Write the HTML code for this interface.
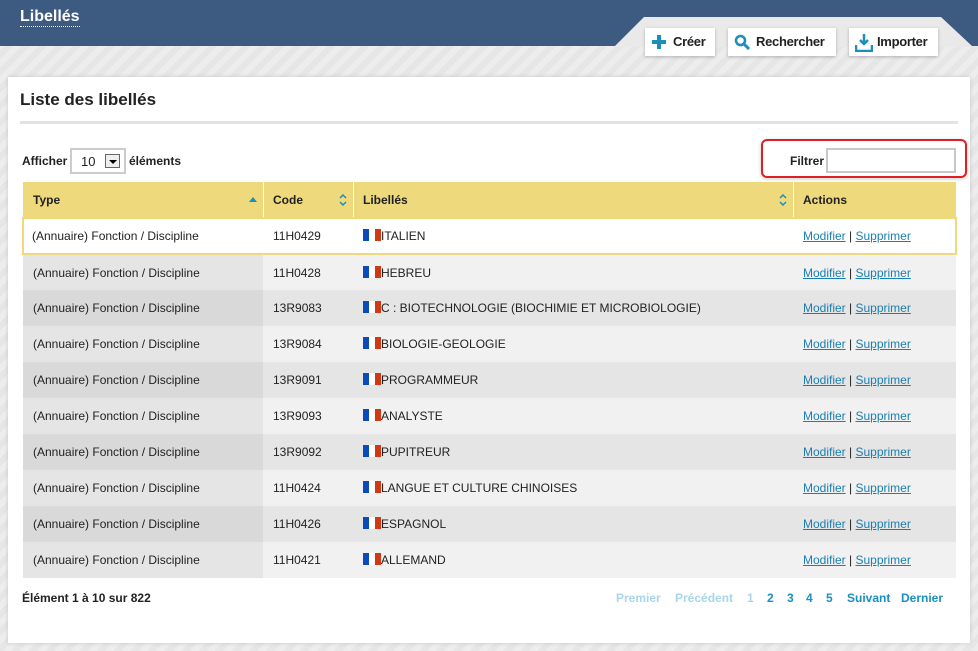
<!DOCTYPE html>
<html><head><meta charset="utf-8"><style>
*{box-sizing:border-box;margin:0;padding:0}
body{width:978px;height:651px;overflow:hidden;font-family:"Liberation Sans",Arial,sans-serif;font-size:12px;color:#222;background:repeating-linear-gradient(135deg,#e6e6e6 0 6px,#ededed 6px 12px);position:relative}
.hdr{position:absolute;left:0;top:0;width:978px;height:46px;background:#3d5a80}
.hdr h1{position:absolute;left:20px;top:8px;color:#fff;font-size:16px;font-weight:bold;border-bottom:1px dotted #fff;line-height:18px}
.tab{position:absolute;left:615px;top:17px;width:363px;height:30px;background:#e9e9e9;clip-path:polygon(29px 0,326px 0,357px 29px,357px 30px,0 30px,0 29px)}
.btn{position:absolute;top:28px;height:28px;background:#fff;box-shadow:0 1px 3px rgba(0,0,0,.25);font-weight:bold;font-size:13px;line-height:28px;color:#222;padding-left:28px;letter-spacing:-0.3px}
.btn svg{position:absolute;left:6px;top:6px}
.panel{position:absolute;left:8px;top:77px;width:962px;height:566px;background:#fff;box-shadow:0 0 4px rgba(0,0,0,.15)}
h2{position:absolute;left:20px;top:90px;font-size:17px;font-weight:bold}
.sep{position:absolute;left:20px;top:121px;width:938px;height:3px;background:#e3e3e3}
.lbl{position:absolute;font-weight:bold;font-size:12px}
table{position:absolute;left:22px;top:182px;width:935px;border-collapse:collapse;table-layout:fixed}
th{background:#eed97c;height:36px;text-align:left;padding-left:10px;font-size:12px;box-shadow:inset 1px 0 #fff;position:relative}
th:first-child{box-shadow:none}
td{height:36px;padding-left:10px;font-size:12px}
tr.w td{background:#fff;border-top:2px solid #eed97c;border-bottom:2px solid #eed97c}
tr.w td:first-child{border-left:2px solid #eed97c;padding-left:8px}tr.w td:last-child{border-right:2px solid #eed97c}
tr.a td{background:#f1f1f1}tr.a td:first-child{background:#e5e5e5}
tr.b td{background:#e5e5e5}tr.b td:first-child{background:#d9d9d9}
.fl{display:inline-block;width:18px;height:12px;vertical-align:-1px;background:linear-gradient(90deg,#0b4bb5 0 6px,#fff 6px 12px,#cf3a12 12px)}
a{color:#1a7fb0;text-decoration:underline}
.pg{position:absolute;top:591px;font-weight:bold;font-size:12px;color:#1a8fc0}
.pg.d{color:#a8d6e8}
.srt{position:absolute;right:6px;top:11px}
</style></head><body>
<div class="hdr"><h1>Libellés</h1></div>
<div class="tab"></div>
<div class="btn" style="left:645px;width:70px"><svg width="16" height="16"><path d="M8 1v14M1 8h14" stroke="#1a8fb8" stroke-width="4"/></svg>Créer</div>
<div class="btn" style="left:728px;width:108px"><svg width="16" height="16"><circle cx="6.5" cy="6.5" r="4.5" fill="none" stroke="#1a8fb8" stroke-width="2.5"/><path d="M10 10l5 5" stroke="#1a8fb8" stroke-width="3"/></svg>Rechercher</div>
<div class="btn" style="left:849px;width:89px"><svg width="18" height="18"><path d="M9 0v9M5 6l4 4 4-4" stroke="#1a8fb8" stroke-width="2.5" fill="none"/><path d="M1 11v6h16v-6" stroke="#1a8fb8" stroke-width="2.5" fill="none"/></svg>Importer</div>
<div class="panel"></div>
<h2>Liste des libellés</h2>
<div class="sep"></div>
<div class="lbl" style="left:22px;top:154px">Afficher</div>
<div style="position:absolute;left:70px;top:148px;width:56px;height:26px;border:2px solid #ccc;background:#fff;font-size:13px;padding:4px 0 0 9px">10<span style="position:absolute;right:4px;top:4px;width:15px;height:14px;border:1px solid #666;background:#eee"><span style="position:absolute;left:3px;top:5px;border:4px solid transparent;border-top:4px solid #000;border-bottom:none"></span></span></div>
<div class="lbl" style="left:129px;top:154px">éléments</div>
<div style="position:absolute;left:761px;top:139px;width:206px;height:39px;border:2px solid #e02020;border-radius:6px;box-shadow:0 1px 4px rgba(0,0,0,.2)"></div>
<div class="lbl" style="left:790px;top:154px">Filtrer</div>
<div style="position:absolute;left:826px;top:148px;width:130px;height:25px;border:2px solid #c8c8c8;background:#fff"></div>
<table>
<colgroup><col style="width:240px"><col style="width:90px"><col style="width:440px"><col></colgroup>
<tr><th>Type<span style="position:absolute;right:6px;top:15px;border:4px solid transparent;border-bottom:5px solid #1a8fb8;border-top:none"></span></th><th>Code<svg class="srt" width="8" height="14"><path d="M1 5l3-3 3 3M1 9l3 3 3-3" stroke="#1a8fb8" stroke-width="1.5" fill="none"/></svg></th><th>Libellés<svg class="srt" width="8" height="14"><path d="M1 5l3-3 3 3M1 9l3 3 3-3" stroke="#1a8fb8" stroke-width="1.5" fill="none"/></svg></th><th>Actions</th></tr>
<tr class="w"><td>(Annuaire) Fonction / Discipline</td><td>11H0429</td><td><span class="fl"></span>ITALIEN</td><td><a>Modifier</a> | <a>Supprimer</a></td></tr>
<tr class="a"><td>(Annuaire) Fonction / Discipline</td><td>11H0428</td><td><span class="fl"></span>HEBREU</td><td><a>Modifier</a> | <a>Supprimer</a></td></tr>
<tr class="b"><td>(Annuaire) Fonction / Discipline</td><td>13R9083</td><td><span class="fl"></span>C : BIOTECHNOLOGIE (BIOCHIMIE ET MICROBIOLOGIE)</td><td><a>Modifier</a> | <a>Supprimer</a></td></tr>
<tr class="a"><td>(Annuaire) Fonction / Discipline</td><td>13R9084</td><td><span class="fl"></span>BIOLOGIE-GEOLOGIE</td><td><a>Modifier</a> | <a>Supprimer</a></td></tr>
<tr class="b"><td>(Annuaire) Fonction / Discipline</td><td>13R9091</td><td><span class="fl"></span>PROGRAMMEUR</td><td><a>Modifier</a> | <a>Supprimer</a></td></tr>
<tr class="a"><td>(Annuaire) Fonction / Discipline</td><td>13R9093</td><td><span class="fl"></span>ANALYSTE</td><td><a>Modifier</a> | <a>Supprimer</a></td></tr>
<tr class="b"><td>(Annuaire) Fonction / Discipline</td><td>13R9092</td><td><span class="fl"></span>PUPITREUR</td><td><a>Modifier</a> | <a>Supprimer</a></td></tr>
<tr class="a"><td>(Annuaire) Fonction / Discipline</td><td>11H0424</td><td><span class="fl"></span>LANGUE ET CULTURE CHINOISES</td><td><a>Modifier</a> | <a>Supprimer</a></td></tr>
<tr class="b"><td>(Annuaire) Fonction / Discipline</td><td>11H0426</td><td><span class="fl"></span>ESPAGNOL</td><td><a>Modifier</a> | <a>Supprimer</a></td></tr>
<tr class="a"><td>(Annuaire) Fonction / Discipline</td><td>11H0421</td><td><span class="fl"></span>ALLEMAND</td><td><a>Modifier</a> | <a>Supprimer</a></td></tr>
</table>
<div class="lbl" style="left:22px;top:591px">Élément 1 à 10 sur 822</div>
<div class="pg d" style="left:616px">Premier</div>
<div class="pg d" style="left:675px">Précédent</div>
<div class="pg d" style="left:747px">1</div>
<div class="pg" style="left:767px">2</div>
<div class="pg" style="left:787px">3</div>
<div class="pg" style="left:806px">4</div>
<div class="pg" style="left:826px">5</div>
<div class="pg" style="left:847px">Suivant</div>
<div class="pg" style="left:901px">Dernier</div>
</body></html>
